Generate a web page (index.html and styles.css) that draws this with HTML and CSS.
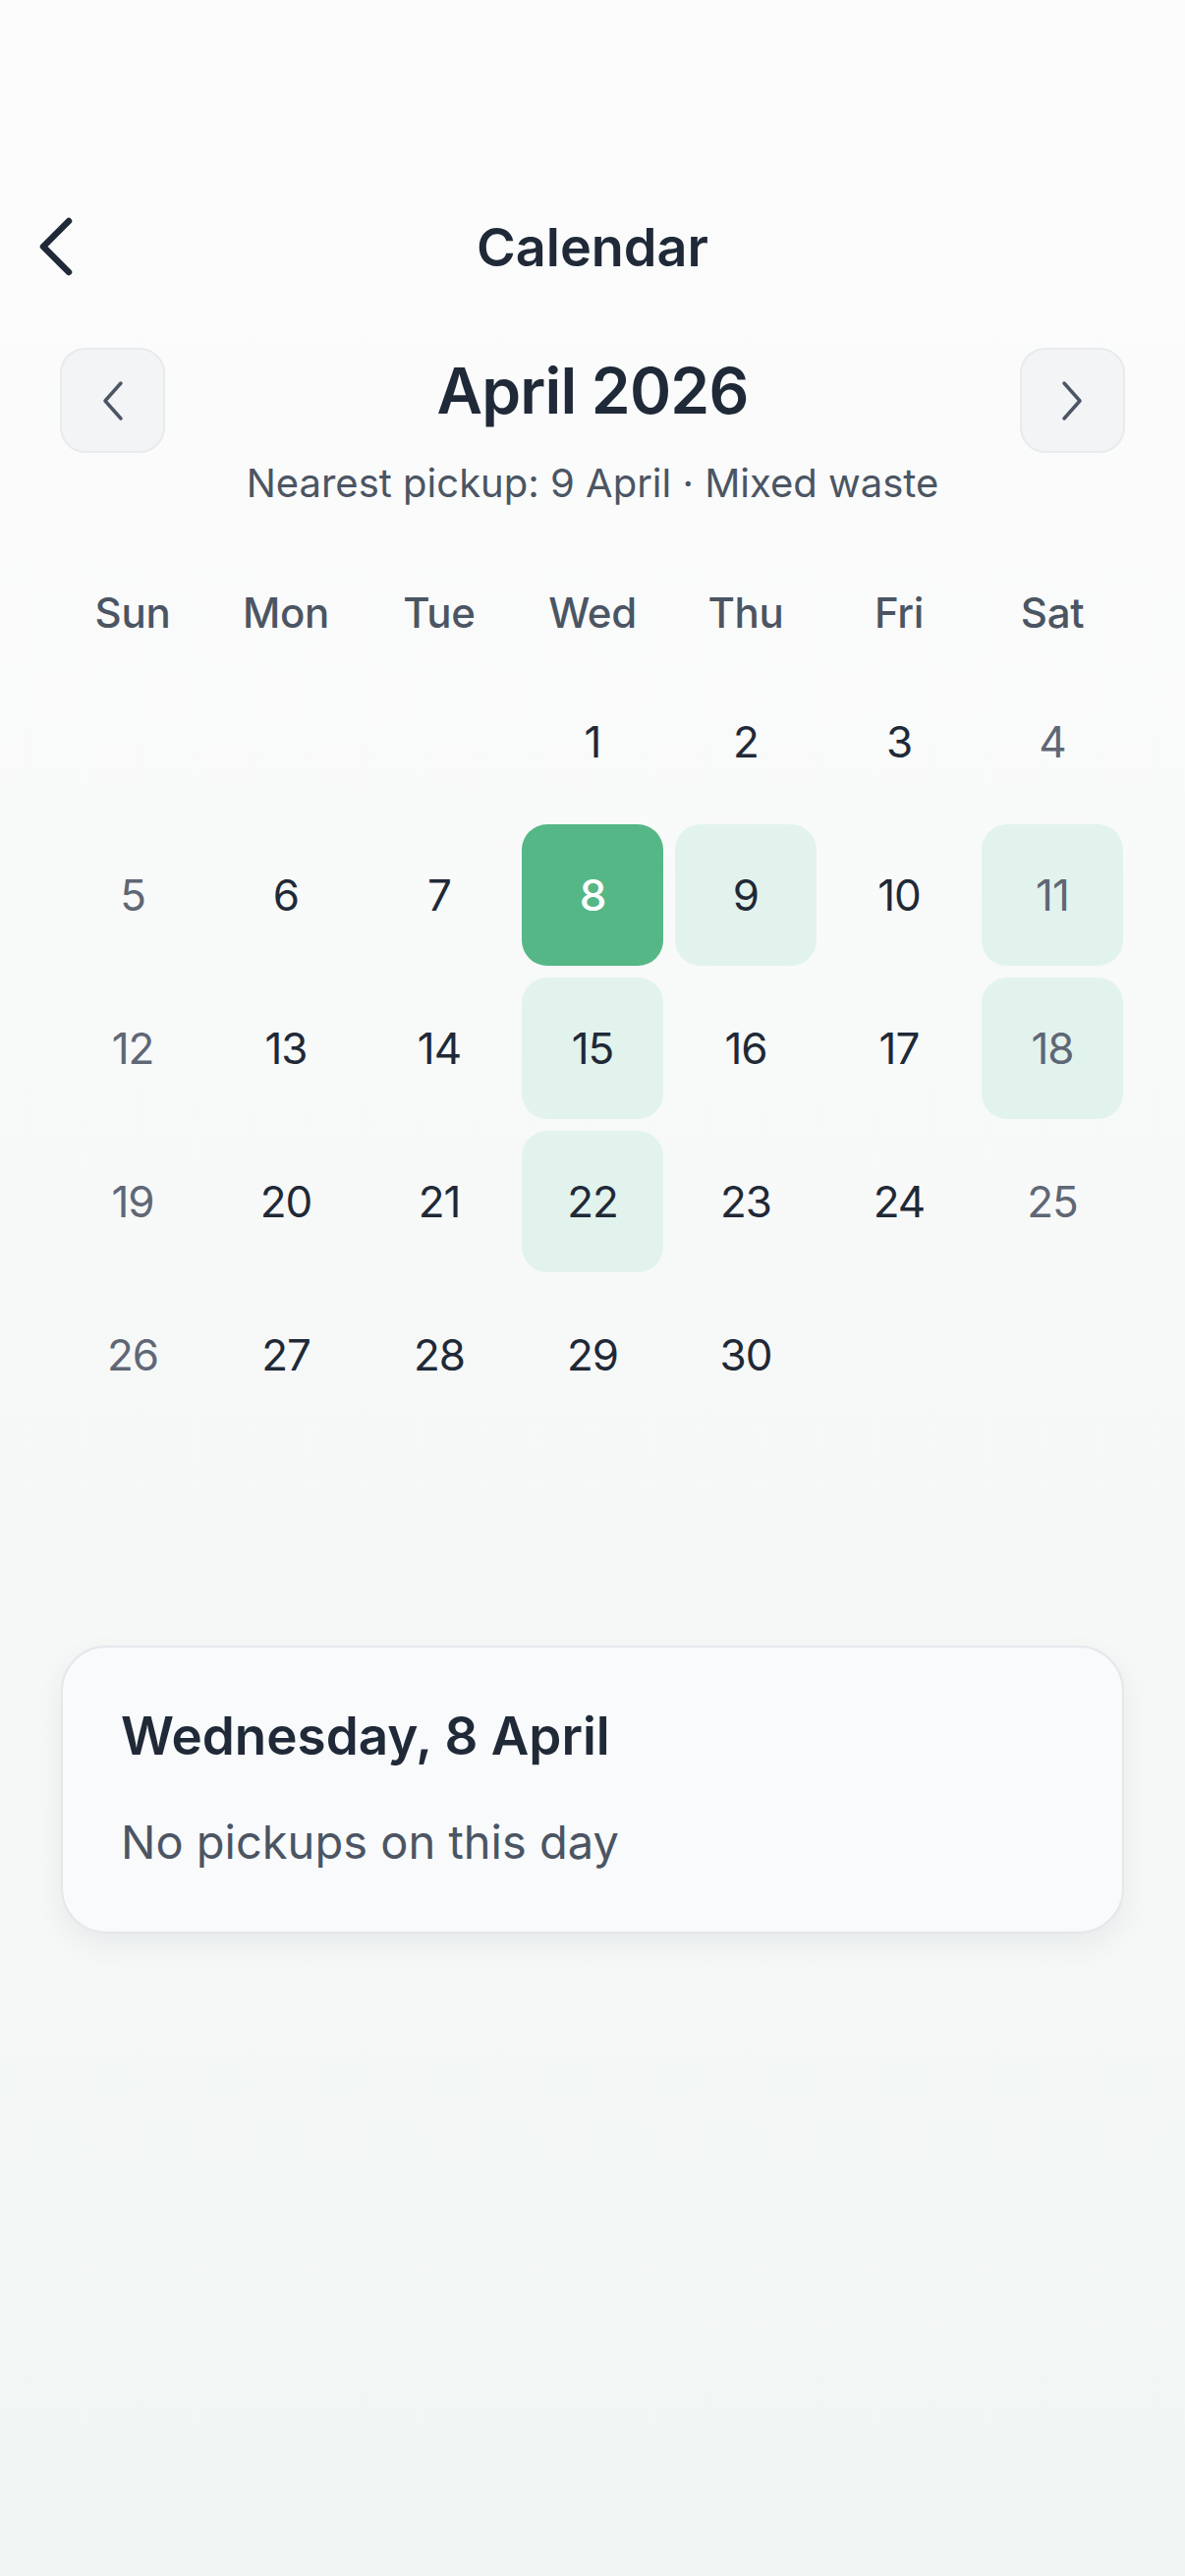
FILE: index.html
```html
<!DOCTYPE html>
<html lang="en">
<head>
<meta charset="utf-8">
<title>Calendar</title>
<link rel="stylesheet" href="styles.css">
</head>
<body>
<div class="screen">
  <header class="topbar">
    <button class="back" aria-label="Back">
      <svg width="40" height="60" viewBox="0 0 40 60"><path d="M30 4 L4 30 L30 56" fill="none" stroke="#1f2937" stroke-width="6.5" stroke-linecap="round" stroke-linejoin="round"/></svg>
    </button>
    <h1 class="title">Calendar</h1>
  </header>

  <section class="month">
    <div class="month-row">
      <button class="nav" aria-label="Previous month">
        <svg width="28" height="44" viewBox="0 0 28 44"><path d="M22 4 L6 22 L22 40" fill="none" stroke="#4b5563" stroke-width="3.5" stroke-linecap="round" stroke-linejoin="round"/></svg>
      </button>
      <h2 class="month-name">April 2026</h2>
      <button class="nav" aria-label="Next month">
        <svg width="28" height="44" viewBox="0 0 28 44"><path d="M6 4 L22 22 L6 40" fill="none" stroke="#4b5563" stroke-width="3.5" stroke-linecap="round" stroke-linejoin="round"/></svg>
      </button>
    </div>
    <p class="nearest">Nearest pickup: 9 April · Mixed waste</p>
  </section>

  <div class="weekdays">
    <span>Sun</span><span>Mon</span><span>Tue</span><span>Wed</span><span>Thu</span><span>Fri</span><span>Sat</span>
  </div>

  <div class="grid">
    <span class="day empty"></span><span class="day empty"></span><span class="day empty"></span>
    <span class="day">1</span><span class="day">2</span><span class="day">3</span><span class="day weekend">4</span>
    <span class="day weekend">5</span><span class="day">6</span><span class="day">7</span><span class="day selected">8</span><span class="day pickup">9</span><span class="day">10</span><span class="day weekend pickup">11</span>
    <span class="day weekend">12</span><span class="day">13</span><span class="day">14</span><span class="day pickup">15</span><span class="day">16</span><span class="day">17</span><span class="day weekend pickup">18</span>
    <span class="day weekend">19</span><span class="day">20</span><span class="day">21</span><span class="day pickup">22</span><span class="day">23</span><span class="day">24</span><span class="day weekend">25</span>
    <span class="day weekend">26</span><span class="day">27</span><span class="day">28</span><span class="day">29</span><span class="day">30</span><span class="day empty"></span><span class="day empty"></span>
  </div>

  <section class="card">
    <h3 class="card-title">Wednesday, 8 April</h3>
    <p class="card-text">No pickups on this day</p>
  </section>
</div>
</body>
</html>
```

FILE: styles.css
```css
* { box-sizing: border-box; }
html, body { margin: 0; padding: 0; }
body {
  width: 1206px;
  min-height: 2622px;
  background: linear-gradient(180deg, #fcfcfc 0%, #f8f9f9 40%, #f1f6f4 100%);
  font-family: Inter, "Noto Sans", "Liberation Sans", sans-serif;
  color: #1f2937;
}
.screen { padding-top: 190px; }

.topbar {
  position: relative;
  height: 122px;
  display: flex;
  align-items: center;
  justify-content: center;
}
.back {
  position: absolute;
  left: 38px;
  top: 31px;
  width: 44px;
  height: 60px;
  padding: 0;
  border: 0;
  background: none;
  display: flex;
  align-items: center;
  justify-content: center;
}
.title {
  margin: 0;
  font-size: 54px;
  font-weight: 600;
  letter-spacing: 0;
  color: #1f2937;
}

.month { margin-top: 42px; padding: 0 61px; }
.month-row {
  display: flex;
  align-items: center;
  justify-content: space-between;
  height: 107px;
}
.nav {
  width: 107px;
  height: 107px;
  border-radius: 26px;
  background: #f3f4f6;
  border: 2px solid #e8eaed;
  padding: 0;
  display: flex;
  align-items: center;
  justify-content: center;
}
.month-name {
  margin: 0 0 20px;
  font-size: 64px;
  font-weight: 600;
  letter-spacing: -0.8px;
  color: #1f2937;
}
.nearest {
  margin: 6px 0 0;
  text-align: center;
  font-size: 40px;
  font-weight: 400;
  color: #4b5563;
  letter-spacing: 0;
}

.weekdays {
  margin: 82px auto 0;
  width: 1080px;
  display: grid;
  grid-template-columns: repeat(7, 144px);
  column-gap: 12px;
  height: 40px;
  align-items: center;
}
.weekdays span {
  text-align: center;
  font-size: 42px;
  font-weight: 500;
  color: #4b5563;
  letter-spacing: -0.3px;
}

.grid {
  margin: 45px auto 0;
  width: 1080px;
  display: grid;
  grid-template-columns: repeat(7, 144px);
  grid-auto-rows: 144px;
  gap: 12px;
}
.day {
  display: flex;
  align-items: center;
  justify-content: center;
  border-radius: 26px;
  font-size: 44px;
  font-weight: 400;
  color: #1f2937;
  letter-spacing: -1px;
}
.day.weekend { color: #5f6775; }
.day.pickup { background: #e2f3ed; }
.day.selected { background: #55b786; color: #ffffff; font-weight: 500; }

.card {
  margin: 224px 62px 0;
  height: 293px;
  border: 2px solid #e5e7eb;
  border-radius: 46px;
  background: #f9fafb;
  padding: 58px 59px 0;
  box-shadow: 0 10px 30px rgba(17, 24, 39, 0.06);
}
.card-title {
  margin: 0;
  font-size: 53px;
  font-weight: 600;
  color: #1f2937;
  letter-spacing: 0;
}
.card-text {
  margin: 47px 0 0;
  font-size: 47px;
  font-weight: 400;
  color: #4b5563;
  letter-spacing: 0;
}
```
